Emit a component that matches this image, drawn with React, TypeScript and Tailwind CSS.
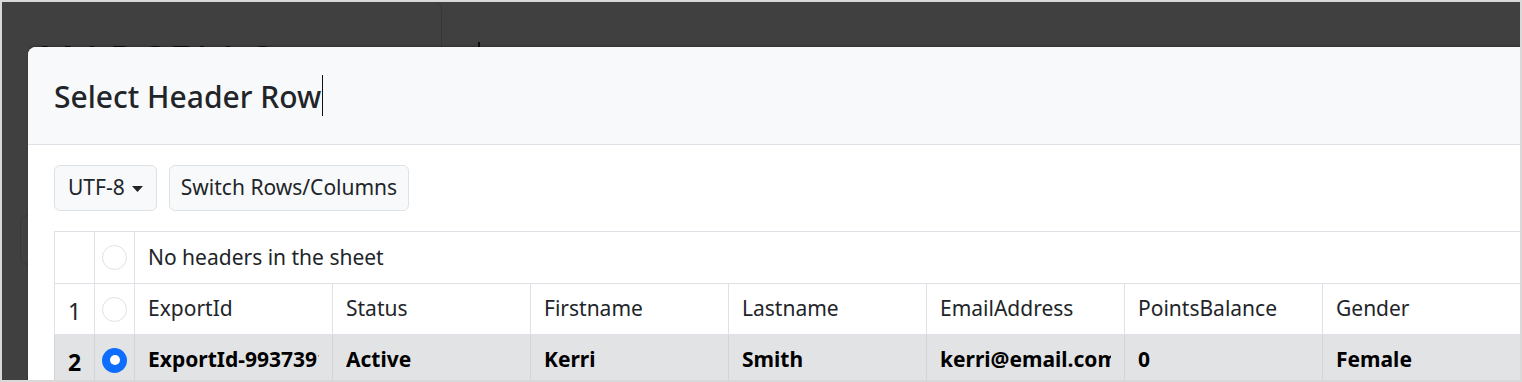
import React from "react";

const FONT = { fontFamily: '"Noto Sans", "Open Sans", sans-serif' } as const;

function Radio({ checked }: { checked?: boolean }) {
  if (checked) {
    return (
      <div className="mx-auto flex h-[25px] w-[25px] items-center justify-center rounded-full bg-[#0d6efd]">
        <div className="h-[10px] w-[10px] rounded-full bg-white" />
      </div>
    );
  }
  return <div className="mx-auto h-[25px] w-[25px] rounded-full border border-[#dee2e6] bg-white" />;
}

const headers = ["ExportId", "Status", "Firstname", "Lastname", "EmailAddress", "PointsBalance", "Gender"];
const row2 = ["ExportId-993739183", "Active", "Kerri", "Smith", "kerri@email.com", "0", "Female"];

export default function App() {
  return (
    <div
      className="relative h-[382px] w-[1522px] overflow-hidden border-2 border-[#d9d9d9] bg-[#404040]"
      style={FONT}
    >
      {/* page behind the backdrop */}
      <div className="absolute left-0 top-[-2px] h-[80px] w-[440px] rounded-tr-[12px] border-r border-[#363636]" />
      <div className="absolute left-0 top-0 h-[45px] w-[440px] overflow-hidden">
        <div className="absolute left-[36px] top-[38px] text-[40px] leading-none tracking-[0.12em] text-[#0e0e0e]">
          MARCELLO
        </div>
      </div>
      <div className="absolute left-[476px] top-[40px] h-[5px] w-[2px] bg-[#0e0e0e]" />
      <div className="absolute left-[18px] top-[213px] h-[50px] w-[100px] rounded-[8px] border border-[#383838]" />

      {/* modal */}
      <div className="absolute left-[26px] top-[45px] w-[1600px] overflow-hidden rounded-tl-[8px] bg-white shadow-[0_-1px_2px_rgba(0,0,0,0.25)]">
        <div className="flex h-[98px] items-center border-b border-[#dee2e6] bg-[#f8f9fa] pl-[26px]">
          <span className="pt-[2px] text-[30px] font-medium leading-none text-[#212529]">Select Header Row</span>
          <span className="ml-[1px] h-[41px] w-[1px] bg-[#111]" />
        </div>
        <div className="pl-[26px] pt-[20px]">
          <div className="flex gap-[12px]">
            <div className="flex h-[46px] w-[103px] items-center gap-[7px] rounded-[6px] border border-[#dee2e6] bg-[#f8f9fa] pl-[13px] text-[21px] text-[#212529]">
              <span>UTF-8</span>
              <svg width="11" height="6" viewBox="0 0 11 6" className="mt-[1px]">
                <path d="M0 0 L11 0 L5.5 6 Z" fill="#212529" />
              </svg>
            </div>
            <div className="flex h-[46px] w-[240px] items-center justify-center rounded-[6px] border border-[#dee2e6] bg-[#f8f9fa] text-[21px] text-[#212529]">
              Switch Rows/Columns
            </div>
          </div>
          <table className="mt-[20px] w-[1466px] table-fixed border-collapse text-[21px]">
            <colgroup>
              <col className="w-[40px]" />
              <col className="w-[40px]" />
              {headers.map((h) => (
                <col key={h} className="w-[198px]" />
              ))}
            </colgroup>
            <tbody>
              <tr className="h-[52px] text-[#212529]">
                <td className="border border-[#dee2e6]" />
                <td className="border border-[#dee2e6]">
                  <Radio />
                </td>
                <td colSpan={7} className="border border-[#dee2e6] px-[13px]">
                  No headers in the sheet
                </td>
              </tr>
              <tr className="h-[51px] text-[#212529]">
                <td className="border border-[#dee2e6] pt-[4px] text-center text-[23px]">1</td>
                <td className="border border-[#dee2e6]">
                  <Radio />
                </td>
                {headers.map((h) => (
                  <td key={h} className="border border-[#dee2e6] px-[13px]">
                    <div className="overflow-hidden whitespace-nowrap">{h}</div>
                  </td>
                ))}
              </tr>
              <tr className="h-[51px] bg-[#e2e3e5] font-bold text-black">
                <td className="border border-[#d3d4d6] pt-[4px] text-center text-[23px]">2</td>
                <td className="border border-[#d3d4d6]">
                  <Radio checked />
                </td>
                {row2.map((v, i) => (
                  <td key={i} className="border border-[#d3d4d6] px-[13px]">
                    <div className="overflow-hidden whitespace-nowrap">{v}</div>
                  </td>
                ))}
              </tr>
            </tbody>
          </table>
        </div>
      </div>
    </div>
  );
}
